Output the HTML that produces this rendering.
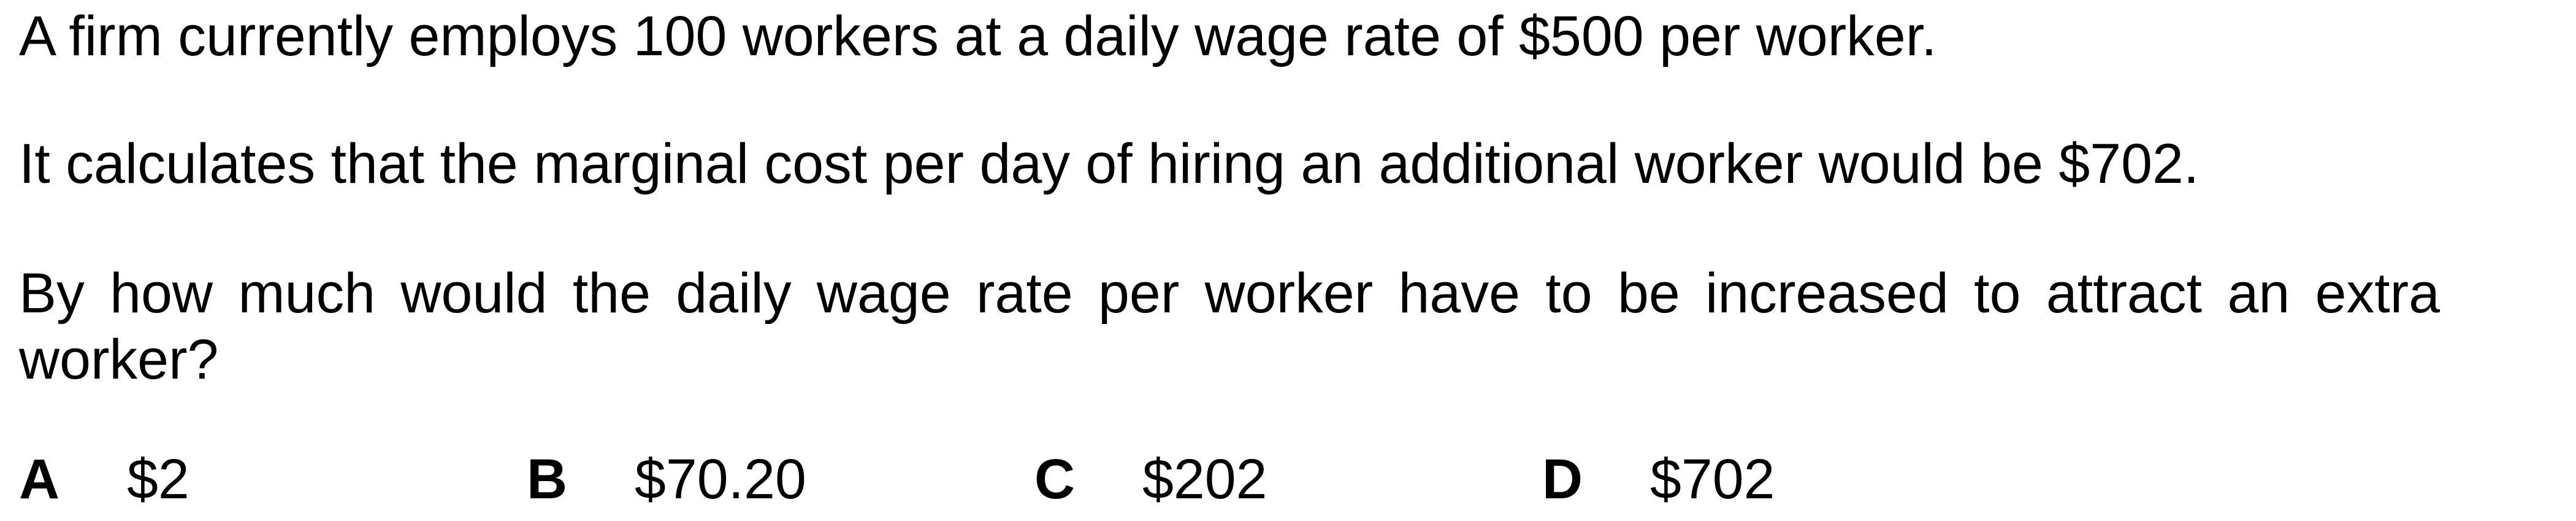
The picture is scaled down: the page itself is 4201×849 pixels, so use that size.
<!DOCTYPE html>
<html><head><meta charset="utf-8">
<style>
html,body{margin:0;padding:0;background:#fff;}
body{width:4201px;height:849px;position:relative;overflow:hidden;font-family:"Liberation Sans",Arial,sans-serif;font-size:91.5px;color:#000;}
.l{position:absolute;left:31px;white-space:nowrap;line-height:108px;}
.j{position:absolute;left:31px;width:3948px;text-align:justify;text-align-last:left;line-height:108px;}
.o{position:absolute;top:727px;line-height:108px;white-space:nowrap;}
b{font-weight:bold;}
</style></head><body>
<div class="l" style="top:5px">A firm currently employs 100 workers at a daily wage rate of $500 per worker.</div>
<div class="l" style="top:213px">It calculates that the marginal cost per day of hiring an additional worker would be $702.</div>
<div class="j" style="top:424px">By how much would the daily wage rate per worker have to be increased to attract an extra worker?</div>
<div class="o" style="left:31px"><b>A</b></div><div class="o" style="left:207px">$2</div>
<div class="o" style="left:859px"><b>B</b></div><div class="o" style="left:1035px">$70.20</div>
<div class="o" style="left:1687px"><b>C</b></div><div class="o" style="left:1863px">$202</div>
<div class="o" style="left:2515px"><b>D</b></div><div class="o" style="left:2691px">$702</div>
</body></html>
